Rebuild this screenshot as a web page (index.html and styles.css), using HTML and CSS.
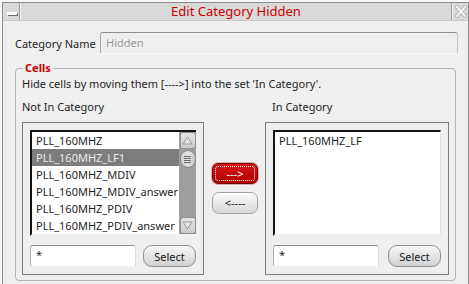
FILE: index.html
```html
<!DOCTYPE html>
<html>
<head>
<meta charset="utf-8">
<link rel="stylesheet" href="styles.css">
</head>
<body>
<div class="window">
  <div class="titlebar">
    <div class="tb-btn tb-min"><span class="min-icon"></span></div>
    <div class="tb-title">Edit Category Hidden</div>
    <div class="tb-btn tb-close">
      <svg width="12" height="13" viewBox="0 0 12 13">
        <path d="M2 2 L10 11 M10 2 L2 11" stroke="#b4b4b4" stroke-width="4" stroke-linecap="square" fill="none"/>
        <path d="M2 2 L10 11 M10 2 L2 11" stroke="#f4f4f4" stroke-width="2" stroke-linecap="square" fill="none"/>
      </svg>
    </div>
  </div>
  <div class="content">
    <div class="name-row">
      <span class="name-label">Category Name</span>
      <div class="name-input">Hidden</div>
    </div>
    <fieldset class="cells">
      <legend>Cells</legend>
      <p class="hint">Hide cells by moving them [----&gt;] into the set 'In Category'.</p>
      <div class="lists">
        <div class="col col-left">
          <div class="col-label">Not In Category</div>
          <div class="group">
            <div class="listbox">
              <ul class="items">
                <li>PLL_160MHZ</li>
                <li class="sel">PLL_160MHZ_LF1</li>
                <li>PLL_160MHZ_MDIV</li>
                <li>PLL_160MHZ_MDIV_answer</li>
                <li>PLL_160MHZ_PDIV</li>
                <li>PLL_160MHZ_PDIV_answer</li>
              </ul>
              <div class="scrollbar">
                <div class="sb-btn">
                  <svg width="11" height="9" viewBox="0 0 11 9"><path d="M5.5 1 L10 8 L1 8 Z" fill="#e6e6e6" stroke="#9a9a9a" stroke-width="1"/></svg>
                </div>
                <div class="sb-thumb"><span></span><span></span><span></span><span></span></div>
                <div class="sb-btn sb-down">
                  <svg width="11" height="9" viewBox="0 0 11 9"><path d="M1 1 L10 1 L5.5 8 Z" fill="#e6e6e6" stroke="#9a9a9a" stroke-width="1"/></svg>
                </div>
              </div>
            </div>
            <div class="filter-row">
              <div class="filter">*</div>
              <button class="btn-select">Select</button>
            </div>
          </div>
        </div>
        <div class="mid">
          <button class="btn-move btn-red">---&gt;</button>
          <button class="btn-move btn-gray">&lt;----</button>
        </div>
        <div class="col col-right">
          <div class="col-label col-label-right">In Category</div>
          <div class="group">
            <div class="listbox listbox-right">
              <ul class="items">
                <li>PLL_160MHZ_LF</li>
              </ul>
            </div>
            <div class="filter-row">
              <div class="filter">*</div>
              <button class="btn-select">Select</button>
            </div>
          </div>
        </div>
      </div>
    </fieldset>
  </div>
</div>
</body>
</html>
```
FILE: styles.css
```css
* { box-sizing: border-box; }
html, body {
  margin: 0;
  padding: 0;
  width: 469px;
  height: 284px;
  overflow: hidden;
  background: #f6f6f6;
}
body {
  font-family: "Noto Sans", sans-serif;
  font-size: 11px;
  color: #1e1e1e;
}
.window {
  margin: 2px 0 0 2px;
  width: 467px;
  height: 290px;
  border: 1px solid #8c8c8c;
  background: #efefef;
}
.titlebar {
  display: flex;
  height: 18px;
  background: #d9d9d9;
  border-bottom: 1px solid #c8c8c8;
}
.tb-btn {
  display: flex;
  align-items: center;
  justify-content: center;
}
.tb-min {
  width: 17px;
  border-right: 1px solid #9a9a9a;
}
.min-icon {
  width: 10px;
  height: 3px;
  margin-top: 4px;
  margin-left: 2px;
  background: #fbfbfb;
  box-shadow: 1px 1px 0 #6a6a6a;
}
.tb-title {
  flex: 1;
  text-align: center;
  color: #cc0000;
  font-size: 13px;
  line-height: 17px;
  border-left: 1px solid #f4f4f4;
  border-right: 1px solid #9a9a9a;
}
.tb-close {
  width: 16px;
  border-left: 1px solid #f4f4f4;
}
.content {
  padding: 11px 10px 0 12px;
}
.name-row {
  display: flex;
  align-items: center;
  height: 22px;
}
.name-label {
  width: 85px;
}
.name-input {
  width: 358px;
  height: 22px;
  border: 1px solid #c4c4c4;
  border-top-color: #8e8e8e;
  border-left-color: #a8a8a8;
  border-bottom-color: #fbfbfb;
  border-radius: 3px;
  padding-left: 5px;
  line-height: 20px;
  color: #9a9a9a;
}
.cells {
  margin: 7px 0 0 0;
  width: 441px;
  border: 1px solid #b4b4b4;
  border-radius: 4px;
  padding: 0 6px 5px 6px;
}
.cells legend {
  color: #cc0000;
  font-weight: bold;
  line-height: 14px;
  padding: 0 2px;
  margin-left: 1px;
}
.hint {
  margin: 0;
  padding-top: 1px;
  line-height: 15px;
}
.lists {
  display: flex;
  align-items: flex-start;
}
.col-left { width: 182px; }
.col-right { width: 184px; }
.col-label {
  line-height: 15px;
  margin-top: 8px;
  margin-bottom: 8px;
}
.col-label-right {
  padding-left: 7px;
}
.group {
  border: 1px solid #7c7c7c;
  padding: 7px;
}
.listbox {
  display: flex;
  height: 106px;
  background: #fff;
  border-top: 2px solid #141414;
  border-left: 2px solid #141414;
  border-bottom: 2px solid #f2f2f2;
}
.listbox-right {
  border-right: 1px solid #e2e2e2;
}
.items {
  flex: 1;
  margin: 0;
  padding: 0;
  list-style: none;
  overflow: hidden;
}
.items li {
  height: 17px;
  line-height: 17px;
  padding-left: 4px;
  white-space: nowrap;
  color: #1e1e1e;
}
.items li.sel {
  background: #7d7d7d;
  color: #e9e9e9;
}
.scrollbar {
  width: 17px;
  background: #9e9e9e;
  display: flex;
  flex-direction: column;
  align-items: center;
}
.sb-btn {
  width: 16px;
  height: 17px;
  display: flex;
  align-items: center;
  justify-content: center;
  background: linear-gradient(#e4e4e4, #cbcbcb);
  border: 1px solid #8f8f8f;
  border-radius: 3px;
}
.sb-down {
  margin-top: auto;
}
.sb-thumb {
  width: 16px;
  height: 18px;
  margin-top: 1px;
  border: 1px solid #888;
  border-radius: 8px;
  background: linear-gradient(90deg, #d0d0d0, #e2e2e2, #c8c8c8);
  display: flex;
  flex-direction: column;
  align-items: center;
  justify-content: center;
  gap: 1px;
}
.sb-thumb span {
  width: 7px;
  height: 1px;
  background: #6e6e6e;
}
.filter-row {
  display: flex;
  justify-content: space-between;
  margin-top: 9px;
  height: 22px;
}
.filter {
  width: 106px;
  height: 22px;
  background: #fff;
  border: 1px solid #dcdcdc;
  border-top-color: #8e8e8e;
  border-left-color: #b0b0b0;
  border-bottom-color: #f4f4f4;
  border-radius: 3px;
  padding-left: 5px;
  line-height: 18px;
  font-size: 11px;
}
.btn-select {
  width: 53px;
  height: 22px;
  padding: 0;
  font-family: "Noto Sans", sans-serif;
  font-size: 11px;
  color: #202020;
  background: linear-gradient(#f8f8f8, #d0d0d0);
  border: 1px solid #909090;
  border-radius: 9px;
}
.mid {
  width: 46px;
  margin: 0 7px 0 8px;
  padding-top: 72px;
  display: flex;
  flex-direction: column;
  gap: 8px;
}
.btn-move {
  width: 46px;
  padding: 0;
  font-family: "Noto Sans", sans-serif;
  font-size: 11px;
  line-height: 14px;
}
.btn-red {
  height: 21px;
  color: #fff;
  background: linear-gradient(#d81616, #ae0000);
  border: 1px solid #7e0000;
  border-radius: 6px;
  outline: 1px dotted #fff;
  outline-offset: -4px;
  box-shadow: 0 0 0 1px #d8b0b0;
}
.btn-gray {
  height: 22px;
  color: #202020;
  background: linear-gradient(#fbfbfb, #d6d6d6);
  border: 1px solid #a6a6a6;
  border-radius: 7px;
}
```
